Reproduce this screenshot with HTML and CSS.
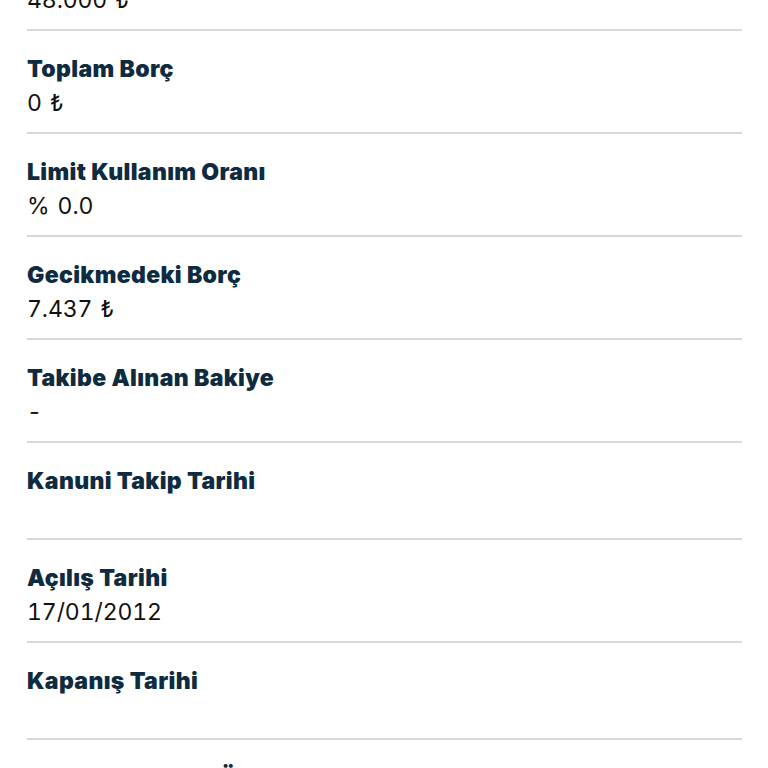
FILE: index.html
```html
<!DOCTYPE html>
<html lang="tr">
<head>
<meta charset="utf-8">
<title>Hesap Detayı</title>
<link rel="stylesheet" href="styles.css">
</head>
<body>
<div class="list">
  <div class="item"><div class="label">Limit</div><div class="value">48.000 ₺</div></div>
  <div class="item"><div class="label">Toplam Borç</div><div class="value">0 ₺</div></div>
  <div class="item"><div class="label">Limit Kullanım Oranı</div><div class="value">% 0.0</div></div>
  <div class="item"><div class="label">Gecikmedeki Borç</div><div class="value">7.437 ₺</div></div>
  <div class="item"><div class="label">Takibe Alınan Bakiye</div><div class="value">-</div></div>
  <div class="item"><div class="label">Kanuni Takip Tarihi</div><div class="value"></div></div>
  <div class="item"><div class="label">Açılış Tarihi</div><div class="value">17/01/2012</div></div>
  <div class="item"><div class="label">Kapanış Tarihi</div><div class="value"></div></div>
  <div class="item"><div class="label">Bildirim Dönemi Ödeme</div><div class="value"></div></div>
</div>
</body>
</html>
```
FILE: styles.css
```css
html, body {
  margin: 0;
  padding: 0;
  background: #ffffff;
  overflow: hidden;
}

body {
  font-family: Inter, "Noto Sans", "DejaVu Sans", sans-serif;
  height: 768px;
}

.list {
  margin-top: -72px;
  padding: 0 26px 0 27px;
}

.item {
  padding: 21px 0 12px;
  border-bottom: 2px solid #d8d8d8;
}

.label {
  font-size: 23px;
  line-height: 34px;
  font-weight: 900;
  letter-spacing: 0.35px;
  color: #0e2b40;
}

.value {
  font-size: 23px;
  line-height: 34px;
  font-weight: 400;
  letter-spacing: -0.1px;
  word-spacing: 2px;
  font-variant-numeric: tabular-nums;
  color: #111111;
}

.value:empty {
  height: 28px;
}
```
